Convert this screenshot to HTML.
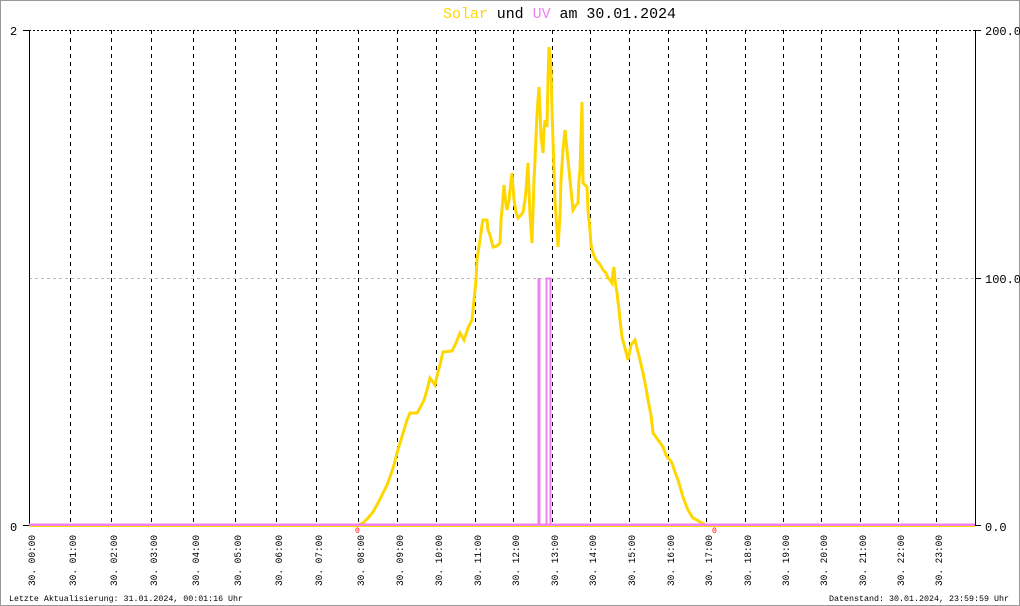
<!DOCTYPE html>
<html><head><meta charset="utf-8"><style>
html,body{margin:0;padding:0;background:#fff;}
svg{display:block;}
text{font-family:"Liberation Mono","DejaVu Sans Mono",monospace;}
</style></head><body>
<svg width="1020" height="606" viewBox="0 0 1020 606" xmlns="http://www.w3.org/2000/svg">
<rect x="0.5" y="0.5" width="1019" height="605" fill="#fff" stroke="#999" stroke-width="1"/>
<text x="443" y="18" font-size="15" textLength="233" lengthAdjust="spacingAndGlyphs"><tspan fill="#ffd700">Solar</tspan><tspan fill="#000"> und </tspan><tspan fill="#ee82ee">UV</tspan><tspan fill="#000"> am 30.01.2024</tspan></text>
<g stroke="#000" stroke-width="1" stroke-dasharray="4,4" shape-rendering="crispEdges">
<line x1="29" y1="30.5" x2="975" y2="30.5" stroke-dasharray="2,2"/>
<line x1="70.5" y1="30" x2="70.5" y2="526"/><line x1="111.5" y1="30" x2="111.5" y2="526"/><line x1="151.5" y1="30" x2="151.5" y2="526"/><line x1="193.5" y1="30" x2="193.5" y2="526"/><line x1="235.5" y1="30" x2="235.5" y2="526"/><line x1="276.5" y1="30" x2="276.5" y2="526"/><line x1="316.5" y1="30" x2="316.5" y2="526"/><line x1="358.5" y1="30" x2="358.5" y2="526"/><line x1="397.5" y1="30" x2="397.5" y2="526"/><line x1="436.5" y1="30" x2="436.5" y2="526"/><line x1="475.5" y1="30" x2="475.5" y2="526"/><line x1="513.5" y1="30" x2="513.5" y2="526"/><line x1="552.5" y1="30" x2="552.5" y2="526"/><line x1="590.5" y1="30" x2="590.5" y2="526"/><line x1="629.5" y1="30" x2="629.5" y2="526"/><line x1="668.5" y1="30" x2="668.5" y2="526"/><line x1="706.5" y1="30" x2="706.5" y2="526"/><line x1="745.5" y1="30" x2="745.5" y2="526"/><line x1="783.5" y1="30" x2="783.5" y2="526"/><line x1="821.5" y1="30" x2="821.5" y2="526"/><line x1="860.5" y1="30" x2="860.5" y2="526"/><line x1="898.5" y1="30" x2="898.5" y2="526"/><line x1="936.5" y1="30" x2="936.5" y2="526"/>
</g>
<line x1="29" y1="278.5" x2="975" y2="278.5" stroke="#bbb" stroke-dasharray="3,3" shape-rendering="crispEdges"/>
<g stroke="#000" stroke-width="1" shape-rendering="crispEdges">
<line x1="29.5" y1="30" x2="29.5" y2="526"/>
<line x1="975.5" y1="30" x2="975.5" y2="526"/>
<line x1="23" y1="30.5" x2="29" y2="30.5"/><line x1="23" y1="525.5" x2="29" y2="525.5"/>
<line x1="975" y1="30.5" x2="981" y2="30.5"/><line x1="975" y1="278.5" x2="981" y2="278.5"/><line x1="975" y1="525.5" x2="981" y2="525.5"/>
</g>
<text x="10" y="35" font-size="12">2</text>
<text x="10" y="531" font-size="12">0</text>
<text x="985" y="35" font-size="12">200.0</text>
<text x="985" y="283" font-size="12">100.0</text>
<text x="985" y="531" font-size="12">0.0</text>
<line x1="29" y1="526.5" x2="975" y2="526.5" stroke="#ffd700" stroke-width="1"/>
<polyline fill="none" stroke="#ffd700" stroke-width="3" stroke-linejoin="miter" points="353,526 358,525 363,523 368,518 373,512 378,503 383,493 387,485 390,477 394,465 397,453 400,443 404,430 407,420 410,413 417,413 420,408 424,400 427,390 430,378 433,382 435,385 438,372 440,365 443,352 452,351 455,345 458,338 460,333 464,340 468,328 472,320 474,300 476,280 477,260 480,240 482,225 483,220 487,220 488,230 490,235 493,247 497,246 500,243 501,220 502,210 504,185 506,205 507,210 509,200 510,190 512,173 514,200 516,212 518,218 521,215 523,212 525,200 526,190 528,163 529,190 530,215 532,243 534,180 535,160 536,137 537,115 538,100 539,87 540,110 541,137 543,153 544,130 545,120 547,127 548,80 549,47 550,55 551,70 552,110 553,140 554,170 555,200 557,230 558,247 560,215 561,180 563,150 565,130 567,150 568,160 570,180 571,190 573,210 576,205 578,203 579,180 580,170 582,102 583,183 587,187 588,210 590,230 591,245 593,253 596,260 598,262 601,266 603,270 606,273 608,278 610,280 612,283 613,272 614,267 615,280 617,293 619,310 620,320 622,337 625,348 628,360 630,350 631,345 635,340 638,352 640,360 643,373 646,388 648,400 651,415 653,433 656,437 658,440 661,444 663,447 666,455 668,458 670,460 672,463 675,472 678,480 681,490 683,497 686,505 688,510 691,515 693,518 697,520 700,522 704,524 707,525"/>
<rect x="29" y="523.5" width="946" height="2.5" fill="#ee82ee"/>
<rect x="537.5" y="278" width="3" height="248" fill="#ee82ee"/>
<path d="M546.5 526 V278.5 H550.5 V526" fill="none" stroke="#ee82ee" stroke-width="2"/>
<text x="355" y="533" font-size="8" fill="#f00">0</text>
<text x="712" y="533" font-size="8" fill="#f00">0</text>
<g font-size="10" fill="#000">
<text transform="translate(35,586) rotate(-90)" textLength="51" lengthAdjust="spacingAndGlyphs">30. 00:00</text>
<text transform="translate(76,586) rotate(-90)" textLength="51" lengthAdjust="spacingAndGlyphs">30. 01:00</text>
<text transform="translate(117,586) rotate(-90)" textLength="51" lengthAdjust="spacingAndGlyphs">30. 02:00</text>
<text transform="translate(157,586) rotate(-90)" textLength="51" lengthAdjust="spacingAndGlyphs">30. 03:00</text>
<text transform="translate(199,586) rotate(-90)" textLength="51" lengthAdjust="spacingAndGlyphs">30. 04:00</text>
<text transform="translate(241,586) rotate(-90)" textLength="51" lengthAdjust="spacingAndGlyphs">30. 05:00</text>
<text transform="translate(282,586) rotate(-90)" textLength="51" lengthAdjust="spacingAndGlyphs">30. 06:00</text>
<text transform="translate(322,586) rotate(-90)" textLength="51" lengthAdjust="spacingAndGlyphs">30. 07:00</text>
<text transform="translate(364,586) rotate(-90)" textLength="51" lengthAdjust="spacingAndGlyphs">30. 08:00</text>
<text transform="translate(403,586) rotate(-90)" textLength="51" lengthAdjust="spacingAndGlyphs">30. 09:00</text>
<text transform="translate(442,586) rotate(-90)" textLength="51" lengthAdjust="spacingAndGlyphs">30. 10:00</text>
<text transform="translate(481,586) rotate(-90)" textLength="51" lengthAdjust="spacingAndGlyphs">30. 11:00</text>
<text transform="translate(519,586) rotate(-90)" textLength="51" lengthAdjust="spacingAndGlyphs">30. 12:00</text>
<text transform="translate(558,586) rotate(-90)" textLength="51" lengthAdjust="spacingAndGlyphs">30. 13:00</text>
<text transform="translate(596,586) rotate(-90)" textLength="51" lengthAdjust="spacingAndGlyphs">30. 14:00</text>
<text transform="translate(635,586) rotate(-90)" textLength="51" lengthAdjust="spacingAndGlyphs">30. 15:00</text>
<text transform="translate(674,586) rotate(-90)" textLength="51" lengthAdjust="spacingAndGlyphs">30. 16:00</text>
<text transform="translate(712,586) rotate(-90)" textLength="51" lengthAdjust="spacingAndGlyphs">30. 17:00</text>
<text transform="translate(751,586) rotate(-90)" textLength="51" lengthAdjust="spacingAndGlyphs">30. 18:00</text>
<text transform="translate(789,586) rotate(-90)" textLength="51" lengthAdjust="spacingAndGlyphs">30. 19:00</text>
<text transform="translate(827,586) rotate(-90)" textLength="51" lengthAdjust="spacingAndGlyphs">30. 20:00</text>
<text transform="translate(866,586) rotate(-90)" textLength="51" lengthAdjust="spacingAndGlyphs">30. 21:00</text>
<text transform="translate(904,586) rotate(-90)" textLength="51" lengthAdjust="spacingAndGlyphs">30. 22:00</text>
<text transform="translate(942,586) rotate(-90)" textLength="51" lengthAdjust="spacingAndGlyphs">30. 23:00</text>
</g>
<text x="9" y="601" font-size="8" textLength="234" lengthAdjust="spacingAndGlyphs">Letzte Aktualisierung: 31.01.2024, 00:01:16 Uhr</text>
<text x="829" y="601" font-size="8" textLength="180" lengthAdjust="spacingAndGlyphs">Datenstand: 30.01.2024, 23:59:59 Uhr</text>
</svg>
</body></html>
